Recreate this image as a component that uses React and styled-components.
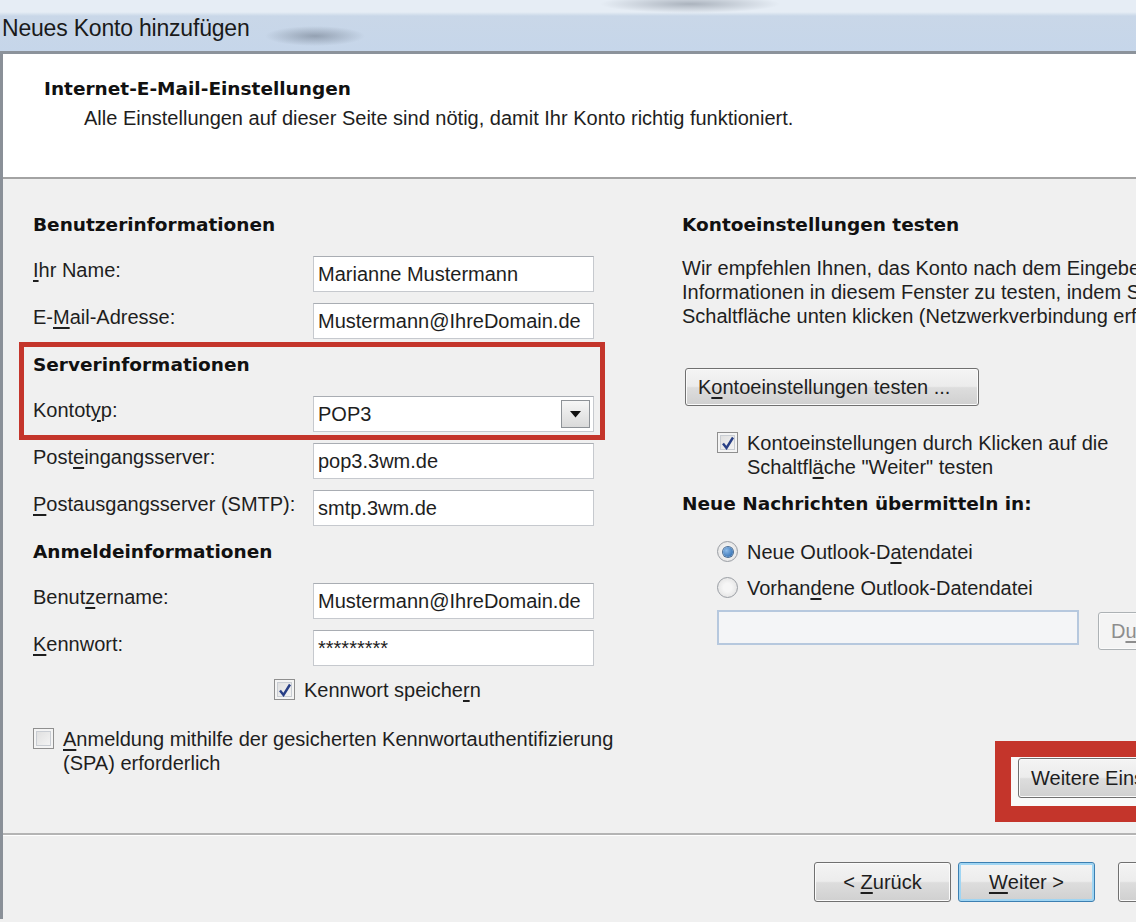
import React from "react";
import styled, { createGlobalStyle, css } from "styled-components";

const GlobalStyle = createGlobalStyle`
  html, body {
    margin: 0;
    padding: 0;
    overflow: hidden;
    background: #f0f0f0;
  }
  body {
    font-family: "Liberation Sans", Arial, sans-serif;
    color: #1e1e1e;
  }
`;

const Page = styled.div`
  width: 1136px;
  height: 922px;
  overflow: hidden;
`;

const Dialog = styled.div`
  width: 1272px;
  display: flex;
  flex-direction: column;
`;

const TitleBar = styled.div`
  height: 51px;
  display: flex;
  align-items: center;
  padding-left: 2px;
  border-bottom: 3px solid #8c939b;
  background:
    radial-gradient(ellipse 50px 10px at 315px 36px, rgba(70, 80, 95, 0.4), transparent),
    radial-gradient(ellipse 90px 9px at 690px 4px, rgba(60, 70, 85, 0.35), transparent),
    linear-gradient(180deg, #e6edf5 0px, #e6edf5 12px, #c9d7e8 16px, #c6d6ea 100%);
`;

const TitleText = styled.span`
  font-family: "Liberation Sans", Arial, sans-serif;
  font-size: 23px;
  color: #1a1a1a;
  padding-top: 6px;
  letter-spacing: -0.2px;
`;

const Frame = styled.div`
  border-left: 3px solid #8a9098;
  display: flex;
  flex-direction: column;
`;

const Header = styled.div`
  height: 125px;
  background: #fff;
  padding: 23px 0 0 41px;
  box-sizing: border-box;
  border-bottom: 2px solid #a3a3a3;
`;

const HeaderTitle = styled.div`
  font-family: "DejaVu Sans", sans-serif;
  font-weight: bold;
  font-size: 18.5px;
  line-height: 24px;
  color: #111;
`;

const HeaderSub = styled.div`
  font-size: 20px;
  line-height: 24px;
  margin: 5px 0 0 40px;
`;

const Body = styled.div`
  height: 656px;
  box-sizing: border-box;
  padding: 34px 0 0 30px;
  display: grid;
  grid-template-columns: 561px 1fr;
  column-gap: 88px;
  border-bottom: 2px solid #b4b4b4;
  box-shadow: 0 1px 0 #fff;
`;

const Column = styled.div`
  display: flex;
  flex-direction: column;
`;

const Heading = styled.div`
  font-family: "DejaVu Sans", sans-serif;
  font-weight: bold;
  font-size: 18.5px;
  line-height: 24px;
  color: #111;
  margin-top: ${(p) => p.$top || 0}px;
  white-space: nowrap;
`;

const Row = styled.div`
  display: grid;
  grid-template-columns: 280px 281px;
  margin-top: ${(p) => p.$top || 0}px;
`;

const Label = styled.div`
  font-size: 20px;
  line-height: 24px;
  padding-top: 2px;
  white-space: nowrap;
`;

const Field = styled.div`
  height: 36px;
  box-sizing: border-box;
  background: #fff;
  border: 1px solid #c6c9ce;
  border-top-color: #a9adb3;
  display: flex;
  align-items: center;
  padding-left: 4px;
  font-size: 20px;
  white-space: nowrap;
  overflow: hidden;
  position: relative;
  ${(p) =>
    p.$blue &&
    css`
      border: 2px solid #b6c8de;
      background: #f4f5f7;
    `}
`;

const DropButton = styled.div`
  position: absolute;
  right: 3px;
  top: 3px;
  width: 29px;
  height: 28px;
  box-sizing: border-box;
  border: 1px solid #8e9297;
  background: linear-gradient(180deg, #f6f6f6, #dadada);
  display: flex;
  align-items: center;
  justify-content: center;
`;

const Highlight = styled.div`
  margin: 3px -11px 0 -14px;
  padding: 6px 6px 0 9px;
  border: 5px solid #c4352b;
  height: 98px;
  box-sizing: border-box;
  display: flex;
  flex-direction: column;
`;

const CheckRow = styled.div`
  display: flex;
  align-items: flex-start;
  gap: 9px;
  margin-top: ${(p) => p.$top || 0}px;
  margin-left: ${(p) => p.$left || 0}px;
  font-size: 20px;
  line-height: 24px;
  white-space: nowrap;
`;

const Box = styled.span`
  flex: none;
  width: 21px;
  height: 21px;
  margin-top: 1px;
  box-sizing: border-box;
  border: 1px solid #8f8f8f;
  background: linear-gradient(135deg, #dcdcdc, #f8f8f8);
  box-shadow: inset 0 0 0 2px #f4f4f4, inset 0 0 0 3px #c9cdd3;
  display: flex;
  align-items: center;
  justify-content: center;
`;

const Radio = styled.span`
  flex: none;
  width: 21px;
  height: 21px;
  margin-top: 1px;
  box-sizing: border-box;
  border-radius: 50%;
  border: 1px solid #9a9ea4;
  background: radial-gradient(circle, #f6f6f6 30%, #dcdcdc 100%);
  display: flex;
  align-items: center;
  justify-content: center;
  &::after {
    content: "";
    width: 10px;
    height: 10px;
    border-radius: 50%;
    display: ${(p) => (p.$on ? "block" : "none")};
    background: radial-gradient(circle at 35% 35%, #8dbbe9, #1f5fa6);
    box-shadow: 0 0 0 1px #4a6c92;
  }
`;

const Paragraph = styled.div`
  font-size: 20px;
  line-height: 24px;
  margin-top: 19px;
  white-space: nowrap;
`;

const Button = styled.div`
  height: 38px;
  box-sizing: border-box;
  padding: 0 12px;
  display: inline-flex;
  align-items: center;
  justify-content: center;
  font-size: 20px;
  white-space: pre;
  border: 1px solid #707070;
  border-radius: 3px;
  background: linear-gradient(180deg, #f4f4f4 0%, #ececec 48%, #dddddd 52%, #d0d0d0 100%);
  box-shadow: inset 0 0 0 1px #fbfbfb;
  color: #1e1e1e;
  ${(p) =>
    p.$primary &&
    css`
      border-color: #3c7fb1;
      box-shadow: inset 0 0 0 2px #9fd5f3;
    `}
  ${(p) =>
    p.$disabled &&
    css`
      border-color: #adb2b5;
      background: #f4f4f4;
      color: #8d8d8d;
    `}
`;

const TestButton = styled(Button)`
  width: 294px;
  margin: 40px 0 0 3px;
  justify-content: flex-start;
  padding-left: 12px;
`;

const Indent = styled.div`
  margin-left: 35px;
  display: flex;
  flex-direction: column;
`;

const PathRow = styled.div`
  display: flex;
  align-items: flex-start;
  gap: 19px;
  margin-top: 10px;
`;

const PathField = styled(Field)`
  width: 362px;
  height: 35px;
`;

const BrowseButton = styled(Button)`
  width: 130px;
  margin-top: 2px;
  justify-content: flex-start;
`;

const MoreBox = styled.div`
  margin: 91px 0 0 313px;
  width: 300px;
  height: 81px;
  box-sizing: border-box;
  border: 16px solid #c4352b;
  background: #f9f9f9;
  padding: 1px 0 0 7px;
`;

const MoreButton = styled(Button)`
  width: 280px;
  height: 40px;
  justify-content: flex-start;
`;

const Footer = styled.div`
  height: 84px;
  box-sizing: border-box;
  padding: 27px 17px 0 0;
  display: flex;
  justify-content: flex-end;
  gap: 7px;
`;

const FooterButton = styled(Button)`
  width: 137px;
  height: 40px;
  margin-left: ${(p) => p.$gap || 0}px;
`;

const U = styled.span`
  text-decoration: underline;
  text-underline-offset: 3px;
`;

const Check = () => (
  <svg width="14" height="14" viewBox="0 0 14 14">
    <path d="M2 7.5 L5.5 12 L12 1.5" fill="none" stroke="#283f86" strokeWidth="2.4" />
  </svg>
);

const Arrow = () => (
  <svg width="11" height="7" viewBox="0 0 11 7">
    <path d="M0 0 H11 L5.5 6.5 Z" fill="#111" />
  </svg>
);

const FormRow = ({ top, label, children }) => (
  <Row $top={top}>
    <Label>{label}</Label>
    {children}
  </Row>
);

export default function App() {
  return (
    <Page>
      <GlobalStyle />
      <Dialog>
        <TitleBar>
          <TitleText>Neues Konto hinzufügen</TitleText>
        </TitleBar>
        <Frame>
          <Header>
            <HeaderTitle>Internet-E-Mail-Einstellungen</HeaderTitle>
            <HeaderSub>
              Alle Einstellungen auf dieser Seite sind nötig, damit Ihr Konto richtig funktioniert.
            </HeaderSub>
          </Header>

          <Body>
            <Column>
              <Heading>Benutzerinformationen</Heading>
              <FormRow top={19} label={<><U>I</U>hr Name:</>}>
                <Field>Marianne Mustermann</Field>
              </FormRow>
              <FormRow top={11} label={<>E-<U>M</U>ail-Adresse:</>}>
                <Field>Mustermann@IhreDomain.de</Field>
              </FormRow>

              <Highlight>
                <Heading>Serverinformationen</Heading>
                <FormRow top={19} label={<>Kontot<U>y</U>p:</>}>
                  <Field>
                    POP3
                    <DropButton>
                      <Arrow />
                    </DropButton>
                  </Field>
                </FormRow>
              </Highlight>

              <FormRow top={3} label={<>Post<U>e</U>ingangsserver:</>}>
                <Field>pop3.3wm.de</Field>
              </FormRow>
              <FormRow top={11} label={<><U>P</U>ostausgangsserver (SMTP):</>}>
                <Field>smtp.3wm.de</Field>
              </FormRow>

              <Heading $top={14}>Anmeldeinformationen</Heading>
              <FormRow top={19} label={<>Benut<U>z</U>ername:</>}>
                <Field>Mustermann@IhreDomain.de</Field>
              </FormRow>
              <FormRow top={11} label={<><U>K</U>ennwort:</>}>
                <Field>*********</Field>
              </FormRow>

              <CheckRow $top={12} $left={241}>
                <Box>
                  <Check />
                </Box>
                <span>
                  Kennwort speiche<U>r</U>n
                </span>
              </CheckRow>

              <CheckRow $top={25}>
                <Box />
                <span>
                  <U>A</U>nmeldung mithilfe der gesicherten Kennwortauthentifizierung
                  <br />
                  (SPA) erforderlich
                </span>
              </CheckRow>
            </Column>

            <Column>
              <Heading>Kontoeinstellungen testen</Heading>
              <Paragraph>
                Wir empfehlen Ihnen, das Konto nach dem Eingeben der
                <br />
                Informationen in diesem Fenster zu testen, indem Sie auf die
                <br />
                Schaltfläche unten klicken (Netzwerkverbindung erforderlich).
              </Paragraph>

              <TestButton>
                K<U>o</U>ntoeinstellungen testen ...
              </TestButton>

              <CheckRow $top={25} $left={35}>
                <Box>
                  <Check />
                </Box>
                <span>
                  Kontoeinstellungen durch Klicken auf die
                  <br />
                  Schaltfl<U>ä</U>che "Weiter" testen
                </span>
              </CheckRow>

              <Heading $top={13}>Neue Nachrichten übermitteln in:</Heading>

              <Indent>
                <CheckRow $top={24}>
                  <Radio $on />
                  <span>
                    Neue Outlook-D<U>a</U>tendatei
                  </span>
                </CheckRow>
                <CheckRow $top={12}>
                  <Radio />
                  <span>
                    Vorhan<U>d</U>ene Outlook-Datendatei
                  </span>
                </CheckRow>
                <PathRow>
                  <PathField $blue />
                  <BrowseButton $disabled>
                    D<U>u</U>rchsuchen
                  </BrowseButton>
                </PathRow>
              </Indent>

              <MoreBox>
                <MoreButton>Weitere Einstellungen ...</MoreButton>
              </MoreBox>
            </Column>
          </Body>

          <Footer>
            <FooterButton>
              {"< "}
              <U>Z</U>
              {"urück"}
            </FooterButton>
            <FooterButton $primary>
              <U>W</U>
              {"eiter >"}
            </FooterButton>
            <FooterButton $gap={16}>Abbrechen</FooterButton>
          </Footer>
        </Frame>
      </Dialog>
    </Page>
  );
}
